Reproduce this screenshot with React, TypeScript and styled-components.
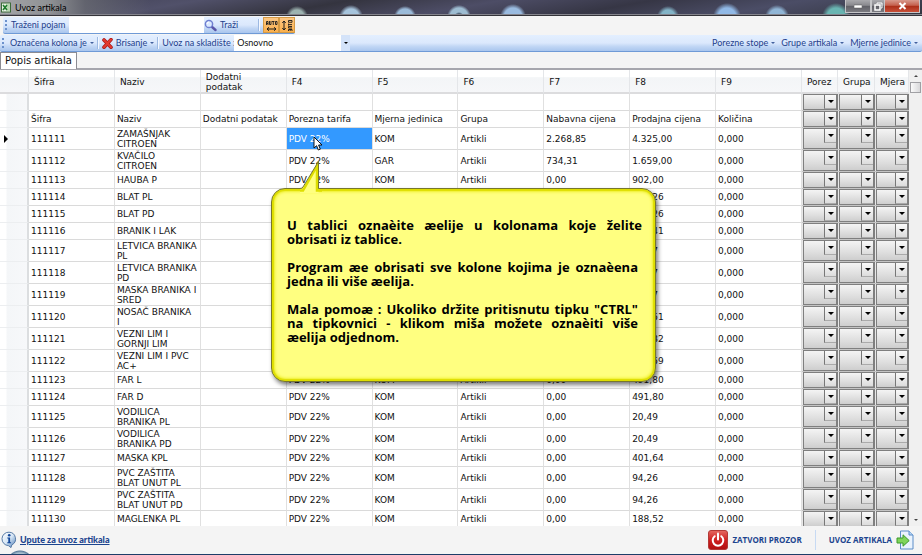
import React from "react";
import styled, { createGlobalStyle } from "styled-components";

const GlobalStyle = createGlobalStyle`
  * { box-sizing: border-box; }
  html, body { margin: 0; padding: 0; height: 100%; overflow: hidden; }
  body { font: 9px/10px "DejaVu Sans", Verdana, sans-serif; color: #111; background: #f4f4f4; }
  button, select, input { font: inherit; color: inherit; margin: 0; padding: 0; border: 0; border-radius: 0; background: none; }
  #root { height: 100%; }
`;

const Window = styled.div`
  position: relative;
  display: flex;
  flex-direction: column;
  height: 100vh;
  overflow: hidden;
`;

/* ---- title bar ---- */
const TitleBar = styled.header`
  flex: none;
  display: flex;
  align-items: stretch;
  height: 16px;
  border-bottom: 1px solid #34343a;
  box-shadow: inset 0 -1px 0 #85858d;
  background:
    linear-gradient(90deg, #a3a5a8 0, #8f9194 50px, rgba(110, 112, 118, 0.7) 85px, transparent 150px),
    radial-gradient(circle at 297px 17px, #9db3b1 0 7px, transparent 11px),
    radial-gradient(circle at 351px 17px, #a6c4dc 0 8px, transparent 12px),
    radial-gradient(circle at 405px 17px, #9bbbd9 0 8px, transparent 11px),
    radial-gradient(circle at 459px 17px, #3b4c60 0 3px, #9ebdd2 5px 9px, transparent 12px),
    radial-gradient(circle at 513px 17px, #9abbe0 0 9px, transparent 13px),
    radial-gradient(circle at 668px 17px, #83b4c7 0 7px, transparent 11px),
    radial-gradient(circle at 727px 17px, #91b9e6 0 9px, transparent 14px),
    radial-gradient(circle at 777px 17px, #90b5d5 0 8px, transparent 12px),
    radial-gradient(circle at 836px 17px, #69b5b2 0 9px, transparent 14px),
    linear-gradient(170deg, #3b3b4d 0, #51516a 20%, #34343f 35%, #4d4d66 50%, #363645 65%, #4b4d66 80%, #33353f 100%);
`;
const Title = styled.h1`
  flex: 1;
  display: flex;
  align-items: center;
  gap: 4px;
  margin: 0;
  padding-left: 1px;
  font: 9px/14px Lato, "Open Sans", sans-serif;
  color: #000;
`;
const WindowButton = styled.button<{ $w: number; $close?: boolean }>`
  width: ${(p) => p.$w}px;
  height: 13px;
  display: grid;
  place-items: center;
  border: 1px solid #c5c5c8;
  border-top: 0;
  border-left-width: ${(p) => (p.$close ? 0 : 1)}px;
  background: ${(p) =>
    p.$close
      ? "linear-gradient(#d89a8d, #c4604d 45%, #ab2d17 50%, #c85039)"
      : "linear-gradient(#a9a9ad, #88888d 45%, #606067 50%, #7a7a80)"};
`;
const WindowButtons = styled.div`
  display: flex;
  margin-right: 2px;
`;

/* ---- tool bars ---- */
const barFill = "linear-gradient(#e3efff 0, #dbe8fc 50%, #c2d7f5 70%, #a9c6ee 100%)";
const ToolBar = styled.div<{ $short?: boolean }>`
  flex: none;
  display: flex;
  align-items: center;
  align-self: ${(p) => (p.$short ? "flex-start" : "stretch")};
  margin: ${(p) => (p.$short ? "1px 0 0 3px" : "1px 0 0")};
  height: 17px;
  padding-left: 2px;
  border-bottom: 1px solid #6f9ad6;
  border-radius: 2px;
  background: ${barFill};
  font: 9px/12px Lato, "Open Sans", sans-serif;
  color: #1e3f8c;
`;
const Grip = styled.span<{ $gap: number }>`
  width: 2px;
  height: 11px;
  margin-right: ${(p) => p.$gap}px;
  background: repeating-linear-gradient(#6c91cc 0 2px, transparent 2px 4px);
`;
const SearchLabel = styled.label`
  width: 58px;
  white-space: nowrap;
`;
const SearchInput = styled.input`
  width: 135px;
  height: 16px;
  background: #fff;
`;
const ToolButton = styled.button<{ $w?: number }>`
  display: flex;
  align-items: center;
  gap: 3px;
  width: ${(p) => (p.$w ? p.$w + "px" : "auto")};
  height: 16px;
  white-space: nowrap;
`;
const ToggleButton = styled.button`
  width: 16px;
  height: 16px;
  display: grid;
  place-items: center;
  border: 1px solid #d49a45;
  background: linear-gradient(#fcc784, #fbb04d);
`;
const Separator = styled.span`
  width: 2px;
  height: 12px;
  margin: 0 3px;
  border-left: 1px solid #9db9e2;
  border-right: 1px solid #f4f8ff;
`;
const Caret = styled.i`
  border: 2px solid transparent;
  border-top-color: #42619e;
  border-bottom: 0;
`;
const Spacer = styled.span`
  flex: 1;
`;
const StoreLabel = styled.label`
  width: 72px;
  white-space: nowrap;
`;
const MenuGroup = styled.div`
  display: flex;
  gap: 6px;
  padding-right: 4px;
`;

/* ---- drop-downs ---- */
const StoreBox = styled.span`
  position: relative;
  display: flex;
  width: 116px;
  height: 16px;
  background: #fff;
`;
const StoreSelect = styled.select`
  appearance: none;
  flex: 1;
  padding: 0 14px 0 3px;
  color: #111;
`;
const StoreArrow = styled.span`
  position: absolute;
  inset: 0 0 0 auto;
  width: 9px;
  display: grid;
  place-items: center;
  background: #d4e3f9;
  pointer-events: none;
`;
const CellBox = styled.span`
  position: relative;
  display: flex;
  height: 100%;
  border: 1px solid #7f7f7f;
  border-right-width: 2px;
  background: linear-gradient(#f4f4f4, #dedede 60%, #cecece);
`;
const CellSelect = styled.select`
  appearance: none;
  flex: 1;
  min-width: 0;
`;
const CellArrow = styled.span`
  position: absolute;
  top: 0;
  right: 0;
  width: 12px;
  height: 14px;
  display: grid;
  place-items: center;
  border-left: 1px solid #777;
  border-bottom: 1px solid #aaa;
  background: linear-gradient(#fafafa, #dcdcdc);
  pointer-events: none;
`;
const BlackArrow = styled.i<{ $s: number }>`
  border: ${(p) => p.$s}px solid transparent;
  border-top-color: #000;
  border-bottom: 0;
`;

/* ---- tabs ---- */
const Tabs = styled.nav`
  flex: none;
  display: flex;
  height: 18px;
  border-bottom: 2px solid #a6a6ad;
`;
const Tab = styled.button`
  height: 17px;
  padding: 0 4px;
  font: 10px/14px "DejaVu Sans", Verdana, sans-serif;
  background: #fff;
  border: 1px solid #8c8c93;
  border-bottom: 0;
`;

/* ---- grid ---- */
const GridArea = styled.main`
  flex: 1;
  min-height: 0;
  display: flex;
  overflow: hidden;
  background: #fff;
`;
const TableFrame = styled.div`
  flex: 1;
  min-width: 0;
  overflow: hidden;
`;
const Table = styled.table`
  width: 100%;
  table-layout: fixed;
  border-collapse: separate;
  border-spacing: 0;
`;
const Col = styled.col<{ $w?: number }>`
  width: ${(p) => (p.$w ? p.$w + "px" : "auto")};
`;
const HeadCell = styled.th<{ $tight?: boolean }>`
  height: 24px;
  padding: ${(p) => (p.$tight ? "1px 0 0 5px" : "1px 24px 0 5px")};
  text-align: left;
  font-weight: 400;
  border-right: 1px solid #e4e6e9;
  border-bottom: 2px solid #dcdcde;
  background: linear-gradient(#fff 0 30%, #f3f5f7 35%, #f6f7f9);
`;
const Row = styled.tr<{ $h: number }>`
  height: ${(p) => p.$h}px;
`;
const Cell = styled.td<{ $selected?: boolean }>`
  padding: 0 0 0 2px;
  white-space: pre-line;
  border-right: 1px solid #e0e0e0;
  border-bottom: 1px solid #dadada;
  color: ${(p) => (p.$selected ? "#fff" : "#111")};
  background: ${(p) => (p.$selected ? "#3399ff" : "#fff")};
`;
const Gutter = styled.th`
  padding: 0 0 0 4px;
  text-align: left;
  border-right: 2px solid #dcdee0;
  border-bottom: 1px solid #eceef0;
  background: linear-gradient(90deg, #fff 6px, #f4f6f8 7px, #f7f8fa);
`;
const SelectCell = styled.td`
  height: inherit;
  padding: 0 0 0 1px;
  border-bottom: 1px solid #c4c4c4;
  background: #e8e8e8;
`;
const Marker = styled.i`
  display: block;
  width: 0;
  border: 4px solid transparent;
  border-left-color: #000;
  border-right: 0;
`;
const ScrollBar = styled.div`
  flex: none;
  width: 13px;
  display: flex;
  flex-direction: column;
  align-items: center;
  padding: 5px 1px;
  background: #f0f0f0;
`;
const ScrollThumb = styled.div`
  width: 11px;
  height: 11px;
  margin-top: 5px;
  border: 1px solid #a0a0a4;
  background: linear-gradient(90deg, #fafafa, #d8d8da);
`;
const ScrollArrow = styled.i<{ $up?: boolean }>`
  border: 2px solid transparent;
  border-${(p) => (p.$up ? "bottom" : "top")}-color: #444;
  border-${(p) => (p.$up ? "top" : "bottom")}: 0;
`;

/* ---- footer ---- */
const Footer = styled.footer`
  flex: none;
  display: flex;
  align-items: center;
  height: 29px;
  padding: 0 8px 1px 1px;
  border-bottom: 1px solid #1d3d68;
  background: radial-gradient(circle at 20px 38px, #a9c0d0 0 11px, #5d7e9c 13px, transparent 14px), #f4f4f4;
  color: #1c458f;
`;
const HelpLink = styled.a`
  display: flex;
  align-items: center;
  gap: 3px;
  font: 900 9px/12px Lato, "Open Sans", sans-serif;
  color: inherit;
`;
const FooterButton = styled.button`
  display: flex;
  align-items: center;
  gap: 4px;
  font: bold 8px/12px "Open Sans", sans-serif;
  white-space: nowrap;
`;
const FooterDivider = styled.span`
  width: 1px;
  height: 20px;
  margin: 0 13px;
  background: #c7daf3;
`;

/* ---- callout ---- */
const Callout = styled.aside`
  position: absolute;
  left: 271px;
  top: 188px;
  width: 385px;
  height: 194px;
  padding: 29px 17px 0 15px;
  border: 1px solid #77772c;
  border-radius: 14px;
  background: #ffff80;
  box-shadow: inset 0 0 1px 2px #dede00, inset 0 0 3px 3px #f0f030, 2px 3px 4px rgba(0, 0, 0, 0.5);
  font: bold 13px/14px "Open Sans", "Noto Sans", sans-serif;
  color: #000;
`;
const Message = styled.p<{ $wide?: boolean }>`
  margin: 0 ${(p) => (p.$wide ? -4 : 0)}px 14px 0;
`;
const Line = styled.span<{ $last?: boolean }>`
  display: block;
  white-space: nowrap;
  text-align: justify;
  text-align-last: ${(p) => (p.$last ? "left" : "justify")};
`;
const Tail = styled.svg`
  position: absolute;
  left: 28px;
  top: -29px;
`;
const Pointer = styled.svg`
  position: absolute;
  left: 313px;
  top: 136px;
`;

const headers = ["Šifra", "Naziv", "Dodatni podatak", "F4", "F5", "F6", "F7", "F8", "F9"];
const selectHeaders = ["Porez", "Grupa", "Mjera"];

type Item = [code: string, name: string, unit: string, cost: string, price: string];
const items: Item[] = [
  ["111111", "ZAMAŠNJAK\nCITROEN", "KOM", "2.268,85", "4.325,00"],
  ["111112", "KVAČILO\nCITROEN", "GAR", "734,31", "1.659,00"],
  ["111113", "HAUBA P", "KOM", "0,00", "902,00"],
  ["111114", "BLAT PL", "KOM", "0,00", "184,26"],
  ["111115", "BLAT PD", "KOM", "0,00", "184,26"],
  ["111116", "BRANIK I LAK", "KOM", "0,00", "639,41"],
  ["111117", "LETVICA BRANIKA\nPL", "KOM", "0,00", "36,07"],
  ["111118", "LETVICA BRANIKA\nPD", "KOM", "0,00", "36,07"],
  ["111119", "MASKA BRANIKA I\nSRED", "KOM", "0,00", "40,17"],
  ["111120", "NOSAČ BRANIKA\nI", "KOM", "0,00", "245,51"],
  ["111121", "VEZNI LIM I\nGORNJI LIM", "KOM", "0,00", "139,32"],
  ["111122", "VEZNI LIM I PVC\nAC+", "KOM", "0,00", "163,59"],
  ["111123", "FAR L", "KOM", "0,00", "491,80"],
  ["111124", "FAR D", "KOM", "0,00", "491,80"],
  ["111125", "VODILICA\nBRANIKA PL", "KOM", "0,00", "20,49"],
  ["111126", "VODILICA\nBRANIKA PD", "KOM", "0,00", "20,49"],
  ["111127", "MASKA KPL", "KOM", "0,00", "401,64"],
  ["111128", "PVC ZAŠTITA\nBLAT UNUT PL", "KOM", "0,00", "94,26"],
  ["111129", "PVC ZAŠTITA\nBLAT UNUT PD", "KOM", "0,00", "94,26"],
  ["111130", "MAGLENKA PL", "KOM", "0,00", "188,52"],
];
const rows: string[][] = [
  Array(9).fill(""),
  ["Šifra", "Naziv", "Dodatni podatak", "Porezna tarifa", "Mjerna jedinica", "Grupa", "Nabavna cijena", "Prodajna cijena", "Količina"],
  ...items.map(([code, name, unit, cost, price]) => [code, name, "", "PDV 22%", unit, "Artikli", cost, price, "0,000"]),
];
const rowHeight = (row: string[]) => (row[1].includes("\n") ? 22 : 17);

const messages = [
  ["U tablici oznaèite æelije u kolonama koje želite", "obrisati iz tablice."],
  ["Program æe obrisati sve kolone kojima je oznaèena", "jedna ili više æelija."],
  ["Mala pomoæ : Ukoliko držite pritisnutu tipku \"CTRL\"", "na tipkovnici - klikom miša možete oznaèiti više", "æelija odjednom."],
];

function AppIcon() {
  return (
    <svg width="10" height="11" viewBox="0 0 10 11" aria-hidden="true">
      <rect x="0.5" y="1" width="9" height="9" fill="#e8f2e4" stroke="#3c6b3a" />
      <rect x="5.5" y="2" width="3.5" height="7" fill="#b9d8b2" />
      <path d="M2 3l4 5M6 3L2 8" stroke="#1f7a2c" strokeWidth="1.6" />
    </svg>
  );
}
function SearchIcon() {
  return (
    <svg width="13" height="13" viewBox="0 0 13 13" aria-hidden="true">
      <path d="M7.5 7.5l4 3.5" stroke="#5a55a8" strokeWidth="2.4" strokeLinecap="round" />
      <circle cx="5" cy="5" r="3.6" fill="#dceaff" stroke="#6f7fd0" strokeWidth="1.5" />
      <path d="M3 5a2 2 0 0 1 2-2" fill="none" stroke="#fff" />
    </svg>
  );
}
function DeleteIcon() {
  return (
    <svg width="11" height="11" viewBox="0 0 11 11" aria-hidden="true">
      <path d="M2 2l7 7.2M9 1.6L2 9.2" stroke="#a81818" strokeWidth="3.6" strokeLinecap="round" />
      <path d="M2 2l7 7.2M9 1.6L2 9.2" stroke="#e23a2e" strokeWidth="2.2" strokeLinecap="round" />
    </svg>
  );
}
function AutoWidthIcon() {
  return (
    <svg width="13" height="13" viewBox="0 0 13 13" fill="none" stroke="#1c1c1c" aria-hidden="true">
      <path d="M1.5 6V2.5h1.5V6M1.5 4.5H3M4.5 2v3.5H6V2M7 2.5h2.5M8.25 2.5V6M10.5 2.5H12v3h-1.5z" strokeWidth="0.9" />
      <path d="M2 10h9M4 8.3L2 10l2 1.7M9 8.3l2 1.7-2 1.7" />
    </svg>
  );
}
function AutoHeightIcon() {
  return (
    <svg width="13" height="13" viewBox="0 0 13 13" fill="none" stroke="#1c1c1c" aria-hidden="true">
      <path d="M3 2v9M1.3 4L3 2l1.7 2M1.3 9L3 11l1.7-2" />
      <path d="M7.5 1.5H11v1.8H7.5zM7.5 5.6H11M7.5 4.6v2M11 7.5H7.5V9H11M7.5 12V10.5H11V12M9.2 10.5V12" strokeWidth="0.9" />
    </svg>
  );
}
function InfoIcon() {
  return (
    <svg width="16" height="18" viewBox="0 0 16 18" aria-hidden="true">
      <defs>
        <linearGradient id="info" x1="0" y1="0" x2="1" y2="1">
          <stop offset="0" stopColor="#fff" />
          <stop offset="0.5" stopColor="#d5e5f5" />
          <stop offset="1" stopColor="#4f7fb8" />
        </linearGradient>
      </defs>
      <path d="M8 1.2a6.7 6.7 0 0 1 2.8 12.7L10 16.6 7.4 14.6A6.7 6.7 0 0 1 8 1.2z" fill="url(#info)" stroke="#4a6f9e" strokeWidth="0.9" />
      <circle cx="8.2" cy="4.2" r="1.3" fill="#13479a" />
      <path d="M6.3 6.6h2.8v4.6h1v1H6.3v-1h1V7.6h-1z" fill="#13479a" />
    </svg>
  );
}
function PowerIcon() {
  return (
    <svg width="20" height="20" viewBox="0 0 20 20" aria-hidden="true">
      <defs>
        <linearGradient id="power" x1="0" y1="0" x2="0" y2="1">
          <stop offset="0" stopColor="#e56a62" />
          <stop offset="0.5" stopColor="#cf2020" />
          <stop offset="1" stopColor="#b00f10" />
        </linearGradient>
      </defs>
      <rect x="0.5" y="0.5" width="19" height="19" rx="2.5" fill="url(#power)" stroke="#b23a36" />
      <path d="M6.7 6.2a5.3 5.3 0 1 0 6.6 0" fill="none" stroke="#fff" strokeWidth="2" strokeLinecap="round" />
      <path d="M10 3.6v6" stroke="#fff" strokeWidth="2" strokeLinecap="round" />
    </svg>
  );
}
function ImportIcon() {
  return (
    <svg width="18" height="20" viewBox="0 0 18 20" aria-hidden="true">
      <path d="M4.5 1H13l4 4v14H4.5z" fill="#eaf3fd" stroke="#5b8cc8" />
      <path d="M13 1v4h4" fill="#b8d5f3" stroke="#5b8cc8" />
      <path d="M1 8h6V4.8l6.2 5.8L7 16.2V13H1z" fill="#7fd45a" stroke="#3d9a2b" />
    </svg>
  );
}

function DropDownCell({ label }: { label: string }) {
  return (
    <SelectCell>
      <CellBox>
        <CellSelect aria-label={label} defaultValue="">
          <option value="" />
        </CellSelect>
        <CellArrow>
          <BlackArrow $s={3} />
        </CellArrow>
      </CellBox>
    </SelectCell>
  );
}

function Menu({ children }: { children: React.ReactNode }) {
  return (
    <ToolButton>
      {children}
      <Caret />
    </ToolButton>
  );
}

export default function App() {
  return (
    <Window>
      <GlobalStyle />
      <TitleBar>
        <Title>
          <AppIcon />
          Uvoz artikala
        </Title>
        <WindowButtons>
          <WindowButton $w={26} aria-label="Minimize">
            <svg width="8" height="5" viewBox="0 0 8 5"><rect y="1" width="8" height="3" fill="#fff" stroke="#555" strokeWidth="0.5" /></svg>
          </WindowButton>
          <WindowButton $w={14} aria-label="Restore">
            <svg width="9" height="9" viewBox="0 0 9 9" fill="none" stroke="#fff"><path d="M3 2V1h5v5H7" /><rect x="1" y="3" width="5" height="5" strokeWidth="1.5" /></svg>
          </WindowButton>
          <WindowButton $w={35} $close aria-label="Close">
            <svg width="9" height="8" viewBox="0 0 9 8"><path d="M1.5 1l6 6M7.5 1l-6 6" stroke="#fff" strokeWidth="2" /></svg>
          </WindowButton>
        </WindowButtons>
      </TitleBar>

      <ToolBar $short>
        <Grip $gap={4} />
        <SearchLabel htmlFor="term">Traženi pojam</SearchLabel>
        <SearchInput id="term" />
        <ToolButton $w={51}>
          <SearchIcon />
          Traži
        </ToolButton>
        <Separator />
        <ToggleButton aria-label="Auto width">
          <AutoWidthIcon />
        </ToggleButton>
        <ToggleButton aria-label="Auto height">
          <AutoHeightIcon />
        </ToggleButton>
      </ToolBar>

      <ToolBar>
        <Grip $gap={6} />
        <Menu>Označena kolona je</Menu>
        <Separator />
        <Menu>
          <DeleteIcon />
          Brisanje
        </Menu>
        <Separator />
        <StoreLabel htmlFor="store">Uvoz na skladište :</StoreLabel>
        <StoreBox>
          <StoreSelect id="store" defaultValue="Osnovno">
            <option>Osnovno</option>
          </StoreSelect>
          <StoreArrow>
            <BlackArrow $s={2} />
          </StoreArrow>
        </StoreBox>
        <Spacer />
        <MenuGroup>
          <Menu>Porezne stope</Menu>
          <Menu>Grupe artikala</Menu>
          <Menu>Mjerne jedinice</Menu>
        </MenuGroup>
      </ToolBar>

      <Tabs>
        <Tab>Popis artikala</Tab>
      </Tabs>

      <GridArea>
        <TableFrame>
          <Table>
            <colgroup>
              <Col $w={29} />
              {headers.map((h) => (
                <Col key={h} />
              ))}
              <Col $w={36} />
              <Col $w={37} />
              <Col $w={34} />
            </colgroup>
            <thead>
              <tr>
                <HeadCell $tight aria-label="Row" />
                {headers.map((h) => (
                  <HeadCell key={h} scope="col">{h}</HeadCell>
                ))}
                {selectHeaders.map((h) => (
                  <HeadCell key={h} $tight scope="col">{h}</HeadCell>
                ))}
              </tr>
            </thead>
            <tbody>
              {rows.map((row, r) => (
                <Row key={r} $h={rowHeight(row)}>
                  <Gutter scope="row">{r === 2 && <Marker />}</Gutter>
                  {row.map((text, c) => (
                    <Cell key={c} $selected={r === 2 && c === 3}>{text}</Cell>
                  ))}
                  {selectHeaders.map((h) => (
                    <DropDownCell key={h} label={h} />
                  ))}
                </Row>
              ))}
            </tbody>
          </Table>
        </TableFrame>
        <ScrollBar>
          <ScrollArrow $up />
          <ScrollThumb />
          <Spacer />
          <ScrollArrow />
        </ScrollBar>
      </GridArea>

      <Footer>
        <HelpLink href="#upute">
          <InfoIcon />
          Upute za uvoz artikala
        </HelpLink>
        <Spacer />
        <FooterButton>
          <PowerIcon />
          ZATVORI PROZOR
        </FooterButton>
        <FooterDivider />
        <FooterButton>
          UVOZ ARTIKALA
          <ImportIcon />
        </FooterButton>
      </Footer>

      <Callout>
        <Tail width="22" height="34" viewBox="0 0 22 34" aria-hidden="true">
          <path d="M0 28.5H2.5L18.5 1.5V33H0z" fill="#ffff80" />
          <path d="M0 30.5H3L17 6V30.5H22" fill="none" stroke="#dede00" strokeWidth="2.5" />
          <path d="M0 28.5Q2 28.5 3 27L18.5 1.5V28.5H22" fill="none" stroke="#77772c" />
        </Tail>
        {messages.map((lines, m) => (
          <Message key={m} $wide={m === 0}>
            {lines.map((line, i) => (
              <Line key={i} $last={i === lines.length - 1}>{line}</Line>
            ))}
          </Message>
        ))}
      </Callout>
      <Pointer width="10" height="16" viewBox="0 0 10 16" aria-hidden="true">
        <path d="M1 1v11l2.6-2.3L5.3 14l2-.8L5.6 9H9z" fill="#fff" stroke="#000" strokeWidth="0.9" />
      </Pointer>
    </Window>
  );
}
